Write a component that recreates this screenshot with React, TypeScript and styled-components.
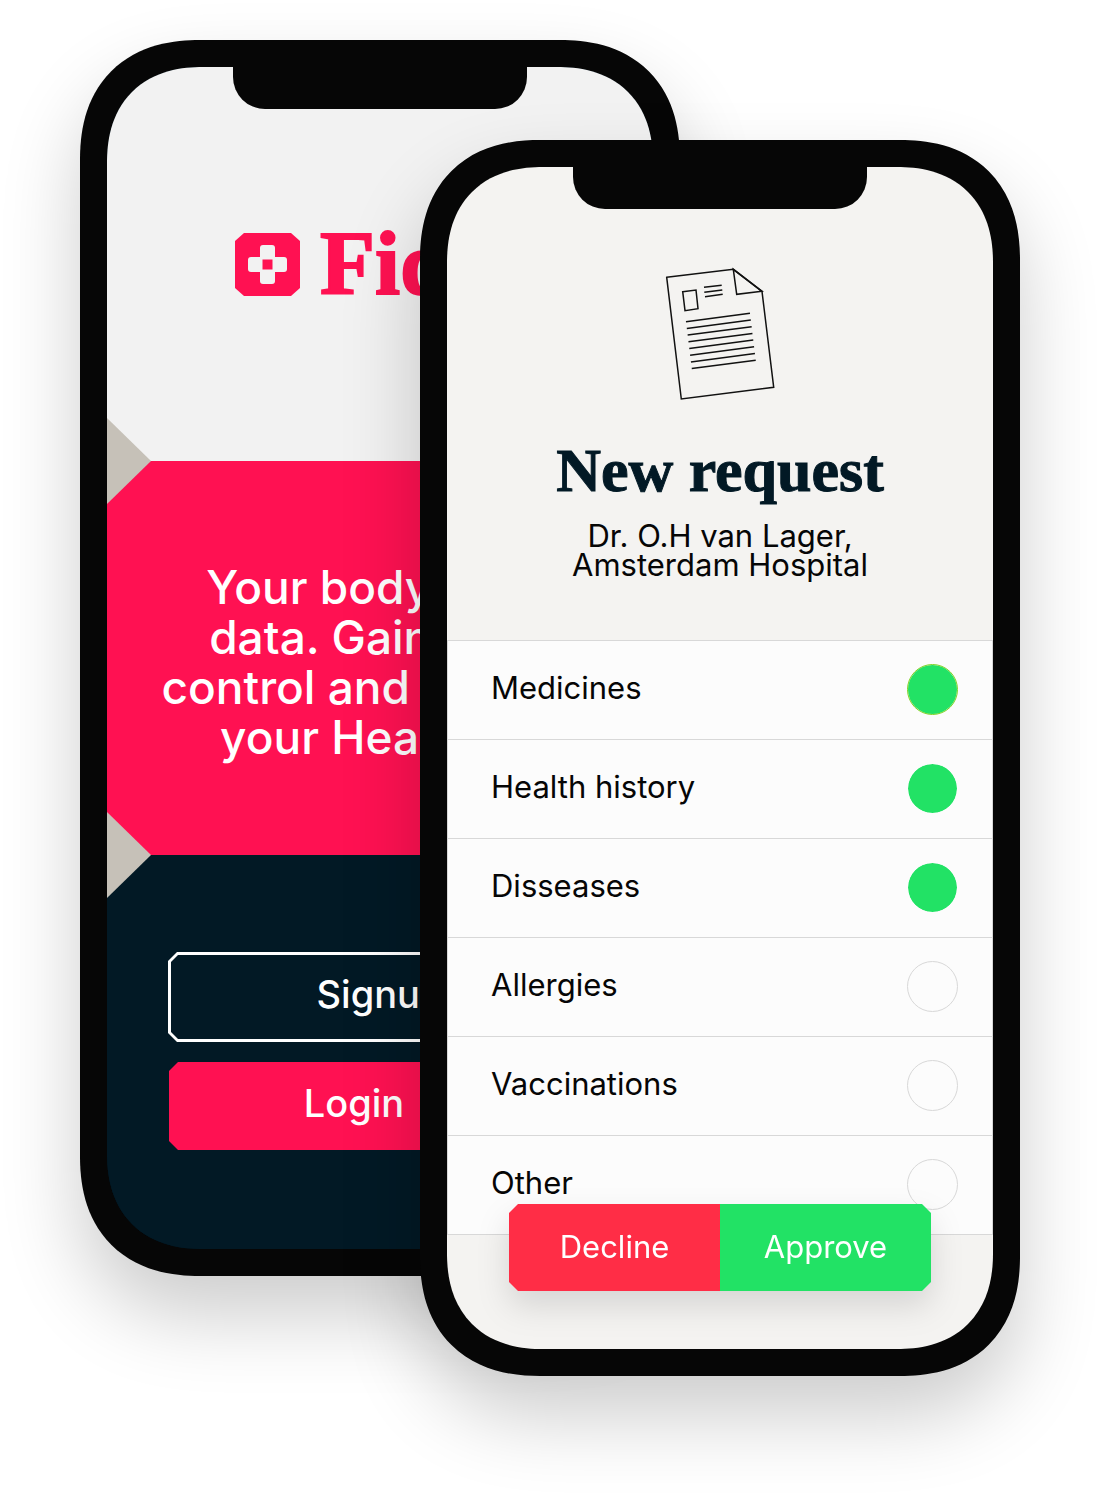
import React from "react";
import styled, { createGlobalStyle, css } from "styled-components";

const colors = {
  frame: "#060606",
  pink: "#ff1152",
  navy: "#021925",
  red: "#ff2d46",
  green: "#22e265",
  sand: "#c6c1b8",
  line: "#d8d8d8",
};

const GlobalStyle = createGlobalStyle`
  *, *::before, *::after { box-sizing: border-box; }
  body {
    margin: 0;
    background: #fff;
    font-family: Inter, "Liberation Sans", sans-serif;
  }
  h1, h2, p, ul { margin: 0; padding: 0; }
  button, input { font: inherit; margin: 0; }
`;

const chamfer = (size: number) => css`
  clip-path: polygon(
    ${size}px 0, calc(100% - ${size}px) 0, 100% ${size}px, 100% calc(100% - ${size}px),
    calc(100% - ${size}px) 100%, ${size}px 100%, 0 calc(100% - ${size}px), 0 ${size}px
  );
`;

const smoothCorner = (round: number, smooth: number) => css`
  border-radius: ${round}px;
  @supports (corner-shape: superellipse(1.2)) {
    border-radius: ${smooth}px;
    corner-shape: superellipse(1.2);
  }
`;

const Stage = styled.main`
  display: grid;
  grid-template-columns: 340fr 260fr 340fr;
  align-items: start;
  padding: 40px 80px 118px;
  overflow: hidden;
`;

const Phone = styled.section<{ $front?: boolean }>`
  grid-row: 1;
  grid-column: ${(p) => (p.$front ? "2 / 4" : "1 / 3")};
  margin-top: ${(p) => (p.$front ? 100 : 0)}px;
  position: relative;
  display: flex;
  flex-direction: column;
  aspect-ratio: 600 / 1236;
  padding: 27px;
  background: ${colors.frame};
  box-shadow: 0 40px 80px rgba(0, 0, 0, 0.2);
  ${smoothCorner(96, 120)}
`;

const Screen = styled.div<{ $bg: string }>`
  flex: 1;
  position: relative;
  display: flex;
  flex-direction: column;
  overflow: hidden;
  background: ${(p) => p.$bg};
  ${smoothCorner(76, 96)}
`;

const Notch = styled.div`
  position: absolute;
  z-index: 2;
  top: 0;
  left: 50%;
  width: 294px;
  height: 42px;
  margin-left: -147px;
  border-radius: 0 0 32px 32px;
  background: ${colors.frame};
`;

const Band = styled.div<{ $bg: string; $notched?: boolean }>`
  flex: 1 1 0;
  position: relative;
  display: flex;
  flex-direction: column;
  align-items: center;
  justify-content: center;
  background: ${(p) => p.$bg};
  ${(p) =>
    p.$notched &&
    css`
      &::before {
        content: "";
        position: absolute;
        top: -43px;
        left: 0;
        width: 44px;
        height: 86px;
        background: ${colors.sand};
        clip-path: polygon(0 0, 100% 50%, 0 100%);
      }
    `}
`;

const Brand = styled.div`
  display: flex;
  align-items: center;
  gap: 20px;
`;

const BrandName = styled.h1`
  font: bold 90px/64px "Liberation Serif", serif;
  color: ${colors.pink};
  -webkit-text-stroke: 2px ${colors.pink};
`;

const Pitch = styled.p`
  padding-top: 8px;
  color: #fff;
  font-size: 46px;
  font-weight: 500;
  line-height: 50px;
  text-align: center;
  white-space: pre-line;
`;

const Welcome = styled.div`
  display: flex;
  flex-direction: column;
  gap: 20px;
  width: 100%;
  padding: 0 62px 2px;
`;

const WelcomeButton = styled.button<{ $outline?: boolean; $trail?: number }>`
  position: relative;
  z-index: 0;
  height: 88px;
  padding: 0 ${(p) => p.$trail ?? 0}px 6px 0;
  border: 0;
  background: ${(p) => (p.$outline ? "#fff" : colors.pink)};
  color: #fff;
  font-size: 38px;
  font-weight: 500;
  ${chamfer(9)}
  ${(p) =>
    p.$outline &&
    css`
      height: 90px;
      margin: 0 -1px;
      &::before {
        content: "";
        position: absolute;
        z-index: -1;
        inset: 3px;
        background: ${colors.navy};
        ${chamfer(7)}
      }
    `}
`;

const Header = styled.header`
  display: flex;
  flex-direction: column;
  align-items: center;
  padding: 99px 24px 61px;
  text-align: center;
`;

const Title = styled.h2`
  margin-top: 36px;
  font: bold 62px/64px "Liberation Serif", serif;
  color: ${colors.navy};
  -webkit-text-stroke: 1px ${colors.navy};
`;

const Sender = styled.p`
  margin-top: 19px;
  font-size: 31px;
  line-height: 29px;
  color: #060606;
  white-space: pre-line;
`;

const Items = styled.ul`
  list-style: none;
  border: 1px solid ${colors.line};
  border-bottom: 0;
  background: #fcfcfc;
`;

const Item = styled.li`
  height: 99px;
  border-bottom: 1px solid ${colors.line};
`;

const ItemLabel = styled.label`
  display: flex;
  align-items: center;
  justify-content: space-between;
  height: 100%;
  padding: 0 34px 2px 43px;
  font-size: 31px;
  color: #060606;
`;

const ItemName = styled.span`
  padding-bottom: 4px;
`;

const Dot = styled.input<{ $ring?: string }>`
  appearance: none;
  width: 51px;
  height: 51px;
  border: 1px solid ${colors.line};
  border-radius: 50%;
  background: transparent;
  &:checked {
    border-color: ${(p) => p.$ring ?? "#fcfcfc"};
    background: ${colors.green};
    background-clip: padding-box;
  }
`;

const ActionShadow = styled.div`
  position: relative;
  align-self: center;
  margin-top: -31px;
  filter: drop-shadow(0 15px 16px rgba(0, 0, 0, 0.12));
`;

const Actions = styled.div`
  display: grid;
  grid-template-columns: 211px 211px;
  ${chamfer(9)}
`;

const ActionButton = styled.button<{ $bg: string }>`
  height: 87px;
  padding: 0 0 2px;
  border: 0;
  background: ${(p) => p.$bg};
  color: #fff;
  font-size: 31px;
`;

const BrandMark = () => (
  <svg width="65" height="63" viewBox="0 0 65 63" aria-hidden="true">
    <path d="M9 0H56L65 8V55L56 63H9L0 55V8Z" fill={colors.pink} />
    <rect x="25" y="12" width="15" height="39" rx="3" fill="#f2f2f2" />
    <rect x="13" y="24" width="39" height="15" rx="3" fill="#f2f2f2" />
    <rect x="27.5" y="26.5" width="10" height="10" fill={colors.pink} />
  </svg>
);

const DocumentIcon = () => (
  <svg width="112" height="136" viewBox="0 0 112 136" fill="none" stroke="#111" strokeWidth="1.5" aria-hidden="true">
    <path d="M2.7 11.3L69.3 3.3L98 25.3L109.7 121.3L17.3 133Z" />
    <path d="M69.3 3.3L72.7 28.3L98 25.3Z" />
    <path d="M18.7 25.7L32 24L34 42.7L21 44.7Z" />
    <path d="M40 21.3L57.7 19.3M40.3 26.3L58.3 24M41 30.7L58.7 28.3" />
    {Array.from({ length: 8 }, (_, i) => (
      <path key={i} d="M22 55.7L86 47.3" transform={`translate(${i * 0.82} ${i * 6.7})`} />
    ))}
  </svg>
);

const items = [
  { name: "Medicines", on: true, ring: "#7ed321" },
  { name: "Health history", on: true },
  { name: "Disseases", on: true },
  { name: "Allergies", on: false },
  { name: "Vaccinations", on: false },
  { name: "Other", on: false },
];

export default function App() {
  return (
    <>
      <GlobalStyle />
      <Stage>
        <Phone>
          <Screen $bg={colors.navy}>
            <Notch />
            <Band $bg="#f2f2f2">
              <Brand>
                <BrandMark />
                <BrandName>Fides</BrandName>
              </Brand>
            </Band>
            <Band $bg={colors.pink} $notched>
              <Pitch>{"Your body, your\ndata. Gain back\ncontrol and manage\nyour Health kit"}</Pitch>
            </Band>
            <Band $bg={colors.navy} $notched>
              <Welcome>
                <WelcomeButton type="button" $outline>Signup</WelcomeButton>
                <WelcomeButton type="button" $trail={52}>Login</WelcomeButton>
              </Welcome>
            </Band>
          </Screen>
        </Phone>
        <Phone $front>
          <Screen $bg="#f4f3f1">
            <Notch />
            <Header>
              <DocumentIcon />
              <Title>New request</Title>
              <Sender>{"Dr. O.H van Lager,\nAmsterdam Hospital"}</Sender>
            </Header>
            <Items>
              {items.map((item) => (
                <Item key={item.name}>
                  <ItemLabel>
                    <ItemName>{item.name}</ItemName>
                    <Dot type="checkbox" defaultChecked={item.on} $ring={item.ring} />
                  </ItemLabel>
                </Item>
              ))}
            </Items>
            <ActionShadow>
              <Actions>
                <ActionButton type="button" $bg={colors.red}>Decline</ActionButton>
                <ActionButton type="button" $bg={colors.green}>Approve</ActionButton>
              </Actions>
            </ActionShadow>
          </Screen>
        </Phone>
      </Stage>
    </>
  );
}
